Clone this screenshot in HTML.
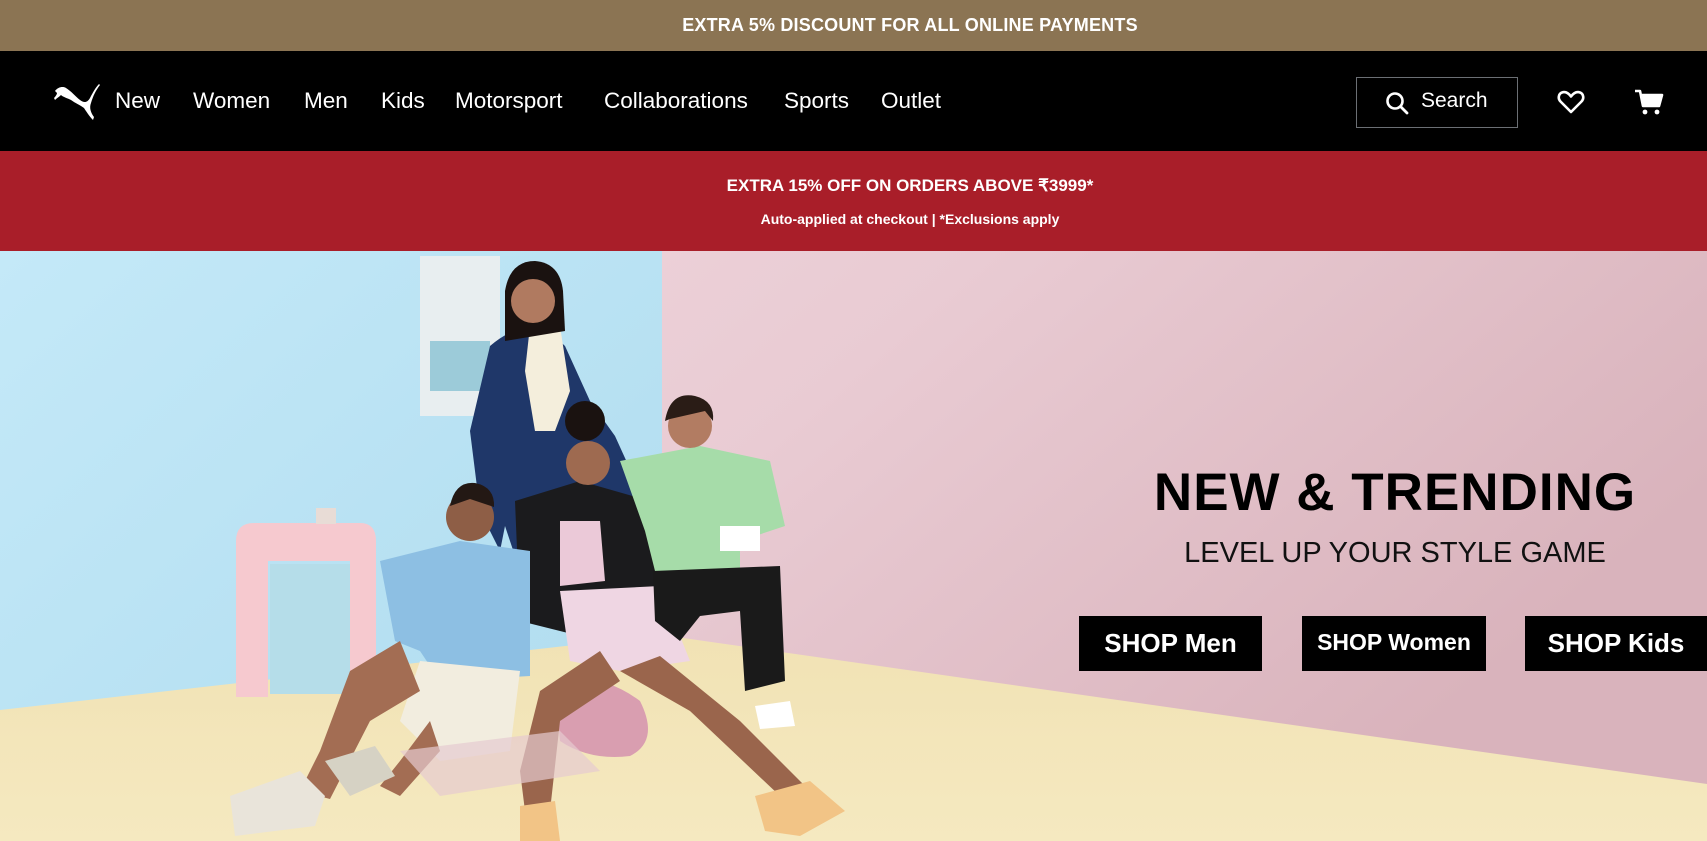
<!DOCTYPE html>
<html><head><meta charset="utf-8">
<style>
*{margin:0;padding:0;box-sizing:border-box}
html,body{width:1707px;height:841px;overflow:hidden;font-family:"Liberation Sans",sans-serif;background:#fff}
.top{position:absolute;left:0;top:0;width:1707px;height:51px;background:#8B7453;color:#fff;font-size:18px;font-weight:bold;line-height:51px}
.top span{position:absolute;left:0;width:1820px;text-align:center;letter-spacing:0.2px}
.nav{position:absolute;left:0;top:51px;width:1707px;height:100px;background:#000;color:#fff}
.nav a{position:absolute;top:36px;font-size:22.5px;color:#fff;text-decoration:none;line-height:28px}
.search{position:absolute;left:1356px;top:26px;width:162px;height:51px;border:1px solid #6b6f74;color:#fff;font-size:21px}
.red{position:absolute;left:0;top:151px;width:1707px;height:100px;background:#A91E29;color:#fff;font-weight:bold}
.red .l1{position:absolute;left:0;width:1820px;top:25px;text-align:center;font-size:17px}
.red .l2{position:absolute;left:0;width:1820px;top:60px;text-align:center;font-size:14px}
.hero{position:absolute;left:0;top:251px;width:1707px;height:590px;overflow:hidden}
h1{position:absolute;left:1100px;width:590px;top:211px;text-align:center;font-size:53px;font-weight:bold;color:#000;letter-spacing:1px}
.sub{position:absolute;left:1100px;width:590px;top:286px;text-align:center;font-size:29px;color:#111}
.btn{position:absolute;top:365px;height:55px;background:#000;color:#fff;font-weight:bold;text-align:center;line-height:55px}
</style></head><body>
<div class="top"><span>EXTRA 5% DISCOUNT FOR ALL ONLINE PAYMENTS</span></div>
<div class="nav">
<svg style="position:absolute;left:53px;top:32px" width="48" height="38" viewBox="0 0 48 38"><path d="M2 8 C5 4 10 3 13 5 C18 8 22 13 27 17 C31 20 34 20 37 15 C40 9 43 4 46 1 L47 2 C43 7 40 13 38 20 C36 25 38 30 41 34 L40 37 C36 33 33 28 31 25 C27 22 22 20 18 17 C14 15 10 14 8 12 C6 14 4 15 2 17 L1 15 C3 13 4 11 4 10 Z" fill="#fff"/></svg>
<a style="left:115px">New</a><a style="left:193px">Women</a><a style="left:304px">Men</a><a style="left:381px">Kids</a><a style="left:455px">Motorsport</a><a style="left:604px">Collaborations</a><a style="left:784px">Sports</a><a style="left:881px">Outlet</a>
<div class="search"><svg style="position:absolute;left:28px;top:13px" width="24" height="24" viewBox="0 0 24 24"><circle cx="10" cy="10" r="7.5" stroke="#fff" stroke-width="2.6" fill="none"/><path d="M15.5 15.5 L22 22" stroke="#fff" stroke-width="2.8" stroke-linecap="round"/></svg><span style="position:absolute;left:64px;top:11px">Search</span></div>
<svg style="position:absolute;left:1557px;top:39px" width="28" height="24" viewBox="0 0 28 24"><path d="M14 22 L3.5 11.5 C0.5 8.5 1.5 3 6 2.2 C9.5 1.6 12 3.8 14 6.5 C16 3.8 18.5 1.6 22 2.2 C26.5 3 27.5 8.5 24.5 11.5 Z" stroke="#fff" stroke-width="2.6" fill="none" stroke-linejoin="round"/></svg>
<svg style="position:absolute;left:1634px;top:37px" width="30" height="28" viewBox="0 0 30 28"><path d="M1 3 H6 L9 18 H25 L28 7 H8" stroke="#fff" stroke-width="2.6" fill="none" stroke-linejoin="round"/><path d="M8 7 H28 L25 17 H9.5 Z" fill="#fff"/><circle cx="11" cy="24" r="2.4" fill="#fff"/><circle cx="23" cy="24" r="2.4" fill="#fff"/></svg>
</div>
<div class="red"><div class="l1">EXTRA 15% OFF ON ORDERS ABOVE ₹3999*</div><div class="l2">Auto-applied at checkout | *Exclusions apply</div></div>
<div class="hero">
<svg width="1707" height="590" viewBox="0 0 1707 590" style="position:absolute;left:0;top:0">
<defs>
<linearGradient id="pk" x1="0" y1="0" x2="1" y2="0.4"><stop offset="0" stop-color="#F1D9E0"/><stop offset="0.5" stop-color="#E9CBD3"/><stop offset="1" stop-color="#D9B3BC"/></linearGradient>
<linearGradient id="bl" x1="0" y1="0" x2="1" y2="1"><stop offset="0" stop-color="#C4E9F8"/><stop offset="1" stop-color="#AEDBEE"/></linearGradient>
<linearGradient id="fl" x1="0" y1="0" x2="0" y2="1"><stop offset="0" stop-color="#F1E2B4"/><stop offset="1" stop-color="#F5E9C0"/></linearGradient>
</defs>
<rect x="0" y="0" width="1707" height="590" fill="url(#pk)"/>
<rect x="0" y="0" width="662" height="590" fill="url(#bl)"/>
<polygon points="0,459 662,384 1707,533 1707,590 0,590" fill="url(#fl)"/>
<rect x="420" y="5" width="80" height="160" fill="#E8EEF0"/>
<rect x="430" y="90" width="60" height="50" fill="#9CCBD9"/>
<path d="M236 290 Q236 272 254 272 H360 Q376 272 376 290 V440 H350 V310 H268 V446 H236 Z" fill="#F6C9CF"/>
<rect x="270" y="313" width="80" height="130" fill="#B5DDE9"/>
<rect x="316" y="257" width="20" height="16" fill="#E8DCD6"/>
<path d="M490 95 Q530 60 565 95 L590 150 L615 185 L640 240 L620 280 L590 260 L585 320 L540 330 L520 320 L505 275 L500 300 L480 260 L470 180 Z" fill="#1F3769"/>
<path d="M530 75 L560 75 L570 140 L555 180 L535 180 L525 120 Z" fill="#F4EEDC"/>
<circle cx="533" cy="45" r="27" fill="#A8715A"/>
<path d="M505 40 Q510 10 535 10 Q560 12 563 40 L565 80 L505 90 Z" fill="#1a1210"/>
<circle cx="533" cy="50" r="22" fill="#B07A60"/>
<path d="M515 250 L580 230 L650 250 L660 380 L600 390 L520 370 Z" fill="#1B1B1D"/>
<path d="M560 270 L600 270 L605 330 L560 335 Z" fill="#EBC9D8"/>
<path d="M560 340 L660 335 L690 410 L620 420 L570 410 Z" fill="#EFD6E3"/>
<circle cx="588" cy="212" r="22" fill="#9E6A50"/>
<circle cx="585" cy="170" r="20" fill="#1a1210"/>
<path d="M620 210 L700 195 L770 210 L785 275 L740 290 L740 325 L655 320 L645 280 Z" fill="#A6DCA9"/>
<rect x="720" y="275" width="40" height="25" fill="#fff"/>
<path d="M653 320 L780 315 L785 430 L745 440 L740 360 L700 365 L680 390 L655 370 Z" fill="#1a1a1a"/>
<circle cx="690" cy="175" r="22" fill="#B27C62"/>
<path d="M665 170 Q670 140 695 145 Q715 150 713 170 L705 160 L670 168 Z" fill="#2a1c16"/>
<path d="M380 310 L460 290 L530 300 L530 425 L440 430 L420 400 L395 390 Z" fill="#8DBFE3"/>
<path d="M420 410 L520 420 L510 500 L440 510 L400 470 Z" fill="#F2EDDF"/>
<circle cx="470" cy="266" r="24" fill="#8E5E46"/>
<path d="M450 255 Q455 230 475 232 Q495 236 494 256 L470 248 Z" fill="#231814"/>
<path d="M555 430 Q600 420 640 450 Q660 490 630 505 Q590 510 560 490 Z" fill="#D99EB0"/>
<path d="M400 390 L350 420 L320 500 L300 540 L330 548 L370 470 L420 440 Z" fill="#A36D53"/>
<path d="M600 400 L540 440 L520 520 L525 560 L550 560 L560 470 L620 430 Z" fill="#9A654C"/>
<path d="M620 420 L690 460 L780 545 L800 560 L815 545 L740 470 L660 405 Z" fill="#9A654C"/>
<path d="M430 470 L400 510 L380 535 L400 545 L440 500 Z" fill="#A36D53"/>
<path d="M230 545 L300 520 L325 545 L315 575 L235 585 Z" fill="#E9E4DA"/>
<path d="M325 510 L375 495 L395 525 L350 545 Z" fill="#D6D2C4"/>
<path d="M520 555 L555 550 L560 590 L520 590 Z" fill="#F2C486"/>
<path d="M755 545 L810 530 L845 560 L800 585 L765 580 Z" fill="#F2C486"/>
<path d="M755 455 L790 450 L795 475 L760 478 Z" fill="#fff"/>
<path d="M400 500 L560 480 L600 520 L440 545 Z" fill="#E6CBD0" opacity="0.7"/>
</svg>
<h1>NEW &amp; TRENDING</h1>
<div class="sub">LEVEL UP YOUR STYLE GAME</div>
<div class="btn" style="left:1079px;width:183px;font-size:26px">SHOP Men</div>
<div class="btn" style="left:1302px;width:184px;font-size:23px;line-height:52px">SHOP Women</div>
<div class="btn" style="left:1525px;width:182px;font-size:26px">SHOP Kids</div>
</div>
</body></html>
